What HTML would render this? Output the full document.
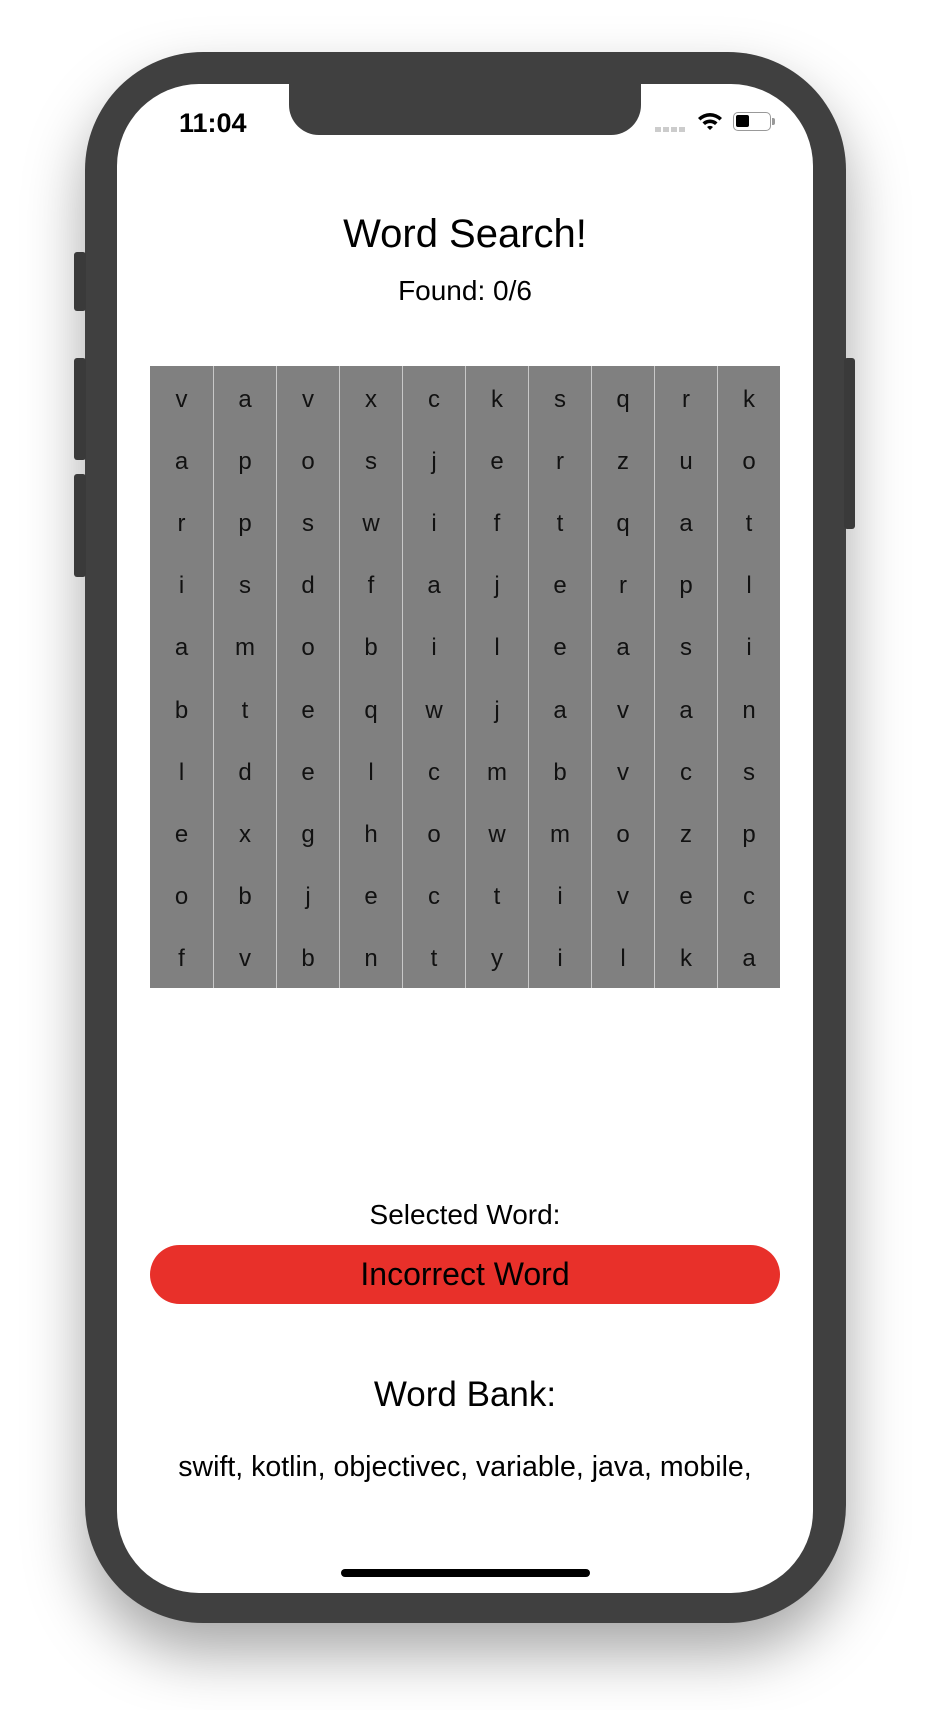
<!DOCTYPE html>
<html><head><style>
*{margin:0;padding:0;box-sizing:border-box}
body{width:930px;height:1710px;background:#fff;position:relative;overflow:hidden;font-family:"Liberation Sans",sans-serif;color:#000}
.phone{position:absolute;left:85px;top:52px;width:761px;height:1571px;background:#404040;border-radius:118px;box-shadow:0 30px 60px rgba(0,0,0,.35)}
.btn{position:absolute;background:#3a3a3a;border-radius:3px}
.screen{position:absolute;left:117px;top:84px;width:696px;height:1509px;background:#fff;border-radius:82px;overflow:hidden}
.notch{position:absolute;left:172px;top:-2px;width:352px;height:53px;background:#404040;border-radius:0 0 30px 30px}
.abs{position:absolute;left:0;width:696px;text-align:center}
.grid{position:absolute;left:33px;top:282px;width:630px;height:622px;background:#808080;display:grid;grid-template-columns:repeat(10,1fr);grid-template-rows:repeat(10,1fr)}
.grid div{display:flex;align-items:center;justify-content:center;font-size:24px;color:#111;border-left:1px solid #c8c8c8;padding-top:5px}
.grid div:nth-child(10n+1){border-left:none}
.red{position:absolute;left:33px;top:1161px;width:630px;height:59px;background:#e8302a;border-radius:30px;font-size:32px;display:flex;align-items:center;justify-content:center}
</style></head><body>
<div class="phone"></div>
<div class="btn" style="left:74px;top:252px;width:12px;height:59px"></div>
<div class="btn" style="left:74px;top:358px;width:12px;height:102px"></div>
<div class="btn" style="left:74px;top:474px;width:12px;height:103px"></div>
<div class="btn" style="left:844px;top:358px;width:11px;height:171px"></div>
<div class="screen">
<div class="notch"></div>
<div style="position:absolute;left:62px;top:24px;font-size:27px;font-weight:bold">11:04</div>
<div style="position:absolute;left:538px;top:43px;width:32px;height:5px;background:repeating-linear-gradient(90deg,#ccc 0 6px,transparent 6px 8px)"></div>
<svg style="position:absolute;left:580px;top:27px" width="26" height="22" viewBox="0 0 26 22"><path d="M1 7a17 17 0 0 1 24 0l-2.5 2.5a13.5 13.5 0 0 0-19 0z M5.5 11.5a11 11 0 0 1 15 0l-2.5 2.5a7.5 7.5 0 0 0-10 0z M10 16a4.5 4.5 0 0 1 6 0l-3 3z" fill="#000"/></svg>
<div style="position:absolute;left:616px;top:28px;width:38px;height:19px;border:1.5px solid #999;border-radius:5px"><div style="position:absolute;left:2px;top:2px;width:13px;height:12px;background:#000;border-radius:2px"></div></div>
<div style="position:absolute;left:655px;top:34px;width:3px;height:7px;background:#999;border-radius:0 2px 2px 0"></div>
<div class="abs" style="top:128px;font-size:40px">Word Search!</div>
<div class="abs" style="top:191px;font-size:28px">Found: 0/6</div>
<div class="grid">
<div>v</div><div>a</div><div>v</div><div>x</div><div>c</div><div>k</div><div>s</div><div>q</div><div>r</div><div>k</div>
<div>a</div><div>p</div><div>o</div><div>s</div><div>j</div><div>e</div><div>r</div><div>z</div><div>u</div><div>o</div>
<div>r</div><div>p</div><div>s</div><div>w</div><div>i</div><div>f</div><div>t</div><div>q</div><div>a</div><div>t</div>
<div>i</div><div>s</div><div>d</div><div>f</div><div>a</div><div>j</div><div>e</div><div>r</div><div>p</div><div>l</div>
<div>a</div><div>m</div><div>o</div><div>b</div><div>i</div><div>l</div><div>e</div><div>a</div><div>s</div><div>i</div>
<div>b</div><div>t</div><div>e</div><div>q</div><div>w</div><div>j</div><div>a</div><div>v</div><div>a</div><div>n</div>
<div>l</div><div>d</div><div>e</div><div>l</div><div>c</div><div>m</div><div>b</div><div>v</div><div>c</div><div>s</div>
<div>e</div><div>x</div><div>g</div><div>h</div><div>o</div><div>w</div><div>m</div><div>o</div><div>z</div><div>p</div>
<div>o</div><div>b</div><div>j</div><div>e</div><div>c</div><div>t</div><div>i</div><div>v</div><div>e</div><div>c</div>
<div>f</div><div>v</div><div>b</div><div>n</div><div>t</div><div>y</div><div>i</div><div>l</div><div>k</div><div>a</div>
</div>
<div class="abs" style="top:1115px;font-size:28px">Selected Word:</div>
<div class="red">Incorrect Word</div>
<div class="abs" style="top:1291px;font-size:35px">Word Bank:</div>
<div class="abs" style="top:1367px;font-size:28.5px">swift, kotlin, objectivec, variable, java, mobile,</div>
<div style="position:absolute;left:224px;top:1485px;width:249px;height:8px;background:#000;border-radius:4px"></div>
</div>
</body></html>
